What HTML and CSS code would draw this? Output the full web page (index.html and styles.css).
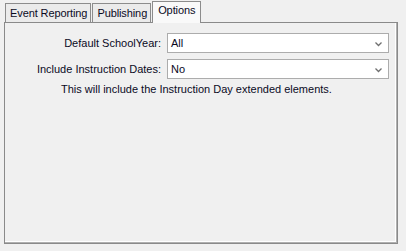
FILE: index.html
```html
<!DOCTYPE html>
<html>
<head>
<meta charset="utf-8">
<link rel="stylesheet" href="styles.css">
</head>
<body>
<div class="window">
  <div class="tabs">
    <div class="tab">Event Reporting</div>
    <div class="tab">Publishing</div>
    <div class="tab active">Options</div>
  </div>
  <div class="panel">
    <div class="form">
      <label class="label">Default SchoolYear:</label>
      <div class="combo"><span>All</span><svg class="arrow" width="7" height="5" viewBox="0 0 7 5"><path d="M0.5 0.5 L3.5 3.5 L6.5 0.5" fill="none" stroke="#6f6f6f" stroke-width="1.3"/></svg></div>
      <label class="label">Include Instruction Dates:</label>
      <div class="combo"><span>No</span><svg class="arrow" width="7" height="5" viewBox="0 0 7 5"><path d="M0.5 0.5 L3.5 3.5 L6.5 0.5" fill="none" stroke="#6f6f6f" stroke-width="1.3"/></svg></div>
    </div>
    <p class="note">This will include the Instruction Day extended elements.</p>
  </div>
</div>
</body>
</html>
```
FILE: styles.css
```css
html, body {
  margin: 0;
  padding: 0;
  background: #f0f0f0;
  width: 406px;
  height: 251px;
  overflow: hidden;
}
body {
  font-family: "Liberation Sans", Arial, sans-serif;
  font-size: 11px;
  color: #0a0a1e;
}
.window {
  padding: 1px 8px 7px 4px;
}
.tabs {
  display: flex;
  align-items: flex-end;
  height: 21px;
  padding-left: 1px;
  position: relative;
  z-index: 1;
}
.tab {
  box-sizing: border-box;
  height: 19px;
  border: 1px solid #8c8c8c;
  border-bottom: none;
  background: #ebebeb;
  padding: 2px 3px 0 4px;
  line-height: 14px;
  margin-right: 1px;
  letter-spacing: -0.1px;
}
.tab.active {
  height: 22px;
  margin-bottom: -1px;
  margin-right: 0;
  background: #f9f9f9;
  padding: 1px 5px 0 5px;
}
.panel {
  box-sizing: border-box;
  height: 222px;
  border: 1px solid #8a8a8a;
  box-shadow: inset -1px -1px 0 #b0b0b0, inset -2px -2px 0 #ffffff;
  background: #f0f0f0;
}
.form {
  display: grid;
  grid-template-columns: 1fr 222px;
  column-gap: 6px;
  row-gap: 6px;
  padding: 10px 8px 0 0;
  align-items: center;
}
.label {
  text-align: right;
}
.combo {
  box-sizing: border-box;
  height: 20px;
  border: 1px solid #acacac;
  background: #ffffff;
  display: flex;
  align-items: center;
  justify-content: space-between;
  padding: 0 6px 0 3px;
}
.arrow {
  margin-top: 3px;
}
.note {
  margin: 4px 0 0 0;
  padding-left: 56px;
}
```
